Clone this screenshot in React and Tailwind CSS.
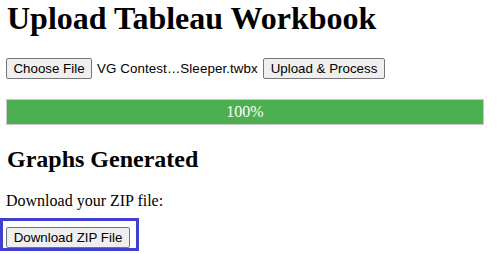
export default function App() {
  const btn =
    "h-[21px] bg-[#efefef] border border-[#767676] rounded-[2px] text-[13.33px] leading-[15px] text-black font-['Liberation_Sans',Arial,sans-serif] flex items-center justify-center shrink-0";
  return (
    <div className="w-[497px] h-[254px] bg-white pl-[6px] font-['Liberation_Serif','Times_New_Roman',serif] text-black overflow-hidden">
      <h1 className="text-[32px] font-bold leading-[37px] h-[37px] pl-[1px]">Upload Tableau Workbook</h1>
      <div className="mt-[21px] flex items-center h-[21px]">
        <button className={btn + " w-[86px]"}>Choose File</button>
        <span className="ml-[5px] w-[166px] text-[13.33px] font-['Liberation_Sans',Arial,sans-serif] tracking-[0.1px]">VG Contest…Sleeper.twbx</span>
        <button className={btn + " w-[122px]"}>Upload &amp; Process</button>
      </div>
      <div className="mt-[20px] w-[478px] h-[26px] border border-[#c8c8c8] bg-white">
        <div className="w-full h-full bg-[#4caf50] flex items-center justify-center text-white text-[16px] leading-[18px]">100%</div>
      </div>
      <h2 className="mt-[20px] text-[24px] font-bold leading-[28px] h-[28px] pl-[1px]">Graphs Generated</h2>
      <p className="mt-[19px] text-[16px] leading-[18px] h-[18px]">Download your ZIP file:</p>
      <div className="-ml-[6px] mt-[8px] w-[139px] h-[33px] border-[3px] border-[#3f3fd0] pl-[3px] pt-[6px]">
        <button className={btn + " w-[124px]"}>Download ZIP File</button>
      </div>
    </div>
  );
}
